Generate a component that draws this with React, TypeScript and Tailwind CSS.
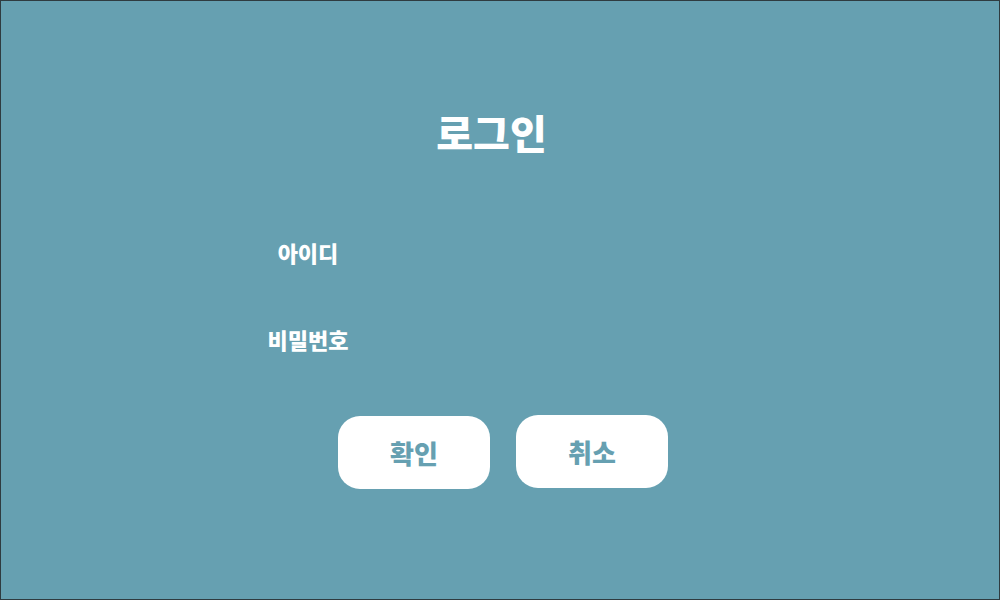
export default function App() {
  return (
    <main
      className="h-[600px] w-full border border-[#2f3b40] bg-[#66a0b1] text-white"
      style={{ fontFamily: '"Noto Sans CJK KR", "Noto Sans", sans-serif' }}
    >
      <div className="flex h-full flex-col">
        <h1 className="mt-[112px] pr-[17px] text-center text-[40px] font-black leading-[39px]">로그인</h1>

        <form className="mt-[85px] flex flex-col">
          <div className="flex items-center">
            <label className="ml-[227px] w-[160px] text-center text-[22px] font-black leading-none">아이디</label>
            <input className="h-[30px] w-[300px] bg-transparent outline-none" />
          </div>
          <div className="mt-[57px] flex items-center">
            <label className="ml-[227px] w-[160px] text-center text-[22px] font-black leading-none">비밀번호</label>
            <input type="password" className="h-[30px] w-[300px] bg-transparent outline-none" />
          </div>

          <div className="mt-[61px] flex justify-center gap-[26px] pl-[6px]">
            <button
              type="button"
              className="mt-px h-[73px] w-[152px] rounded-[22px] bg-white text-[26px] font-black text-[#66a0b1]"
            >
              확인
            </button>
            <button
              type="button"
              className="h-[73px] w-[152px] rounded-[22px] bg-white text-[26px] font-black text-[#66a0b1]"
            >
              취소
            </button>
          </div>
        </form>
      </div>
    </main>
  );
}
